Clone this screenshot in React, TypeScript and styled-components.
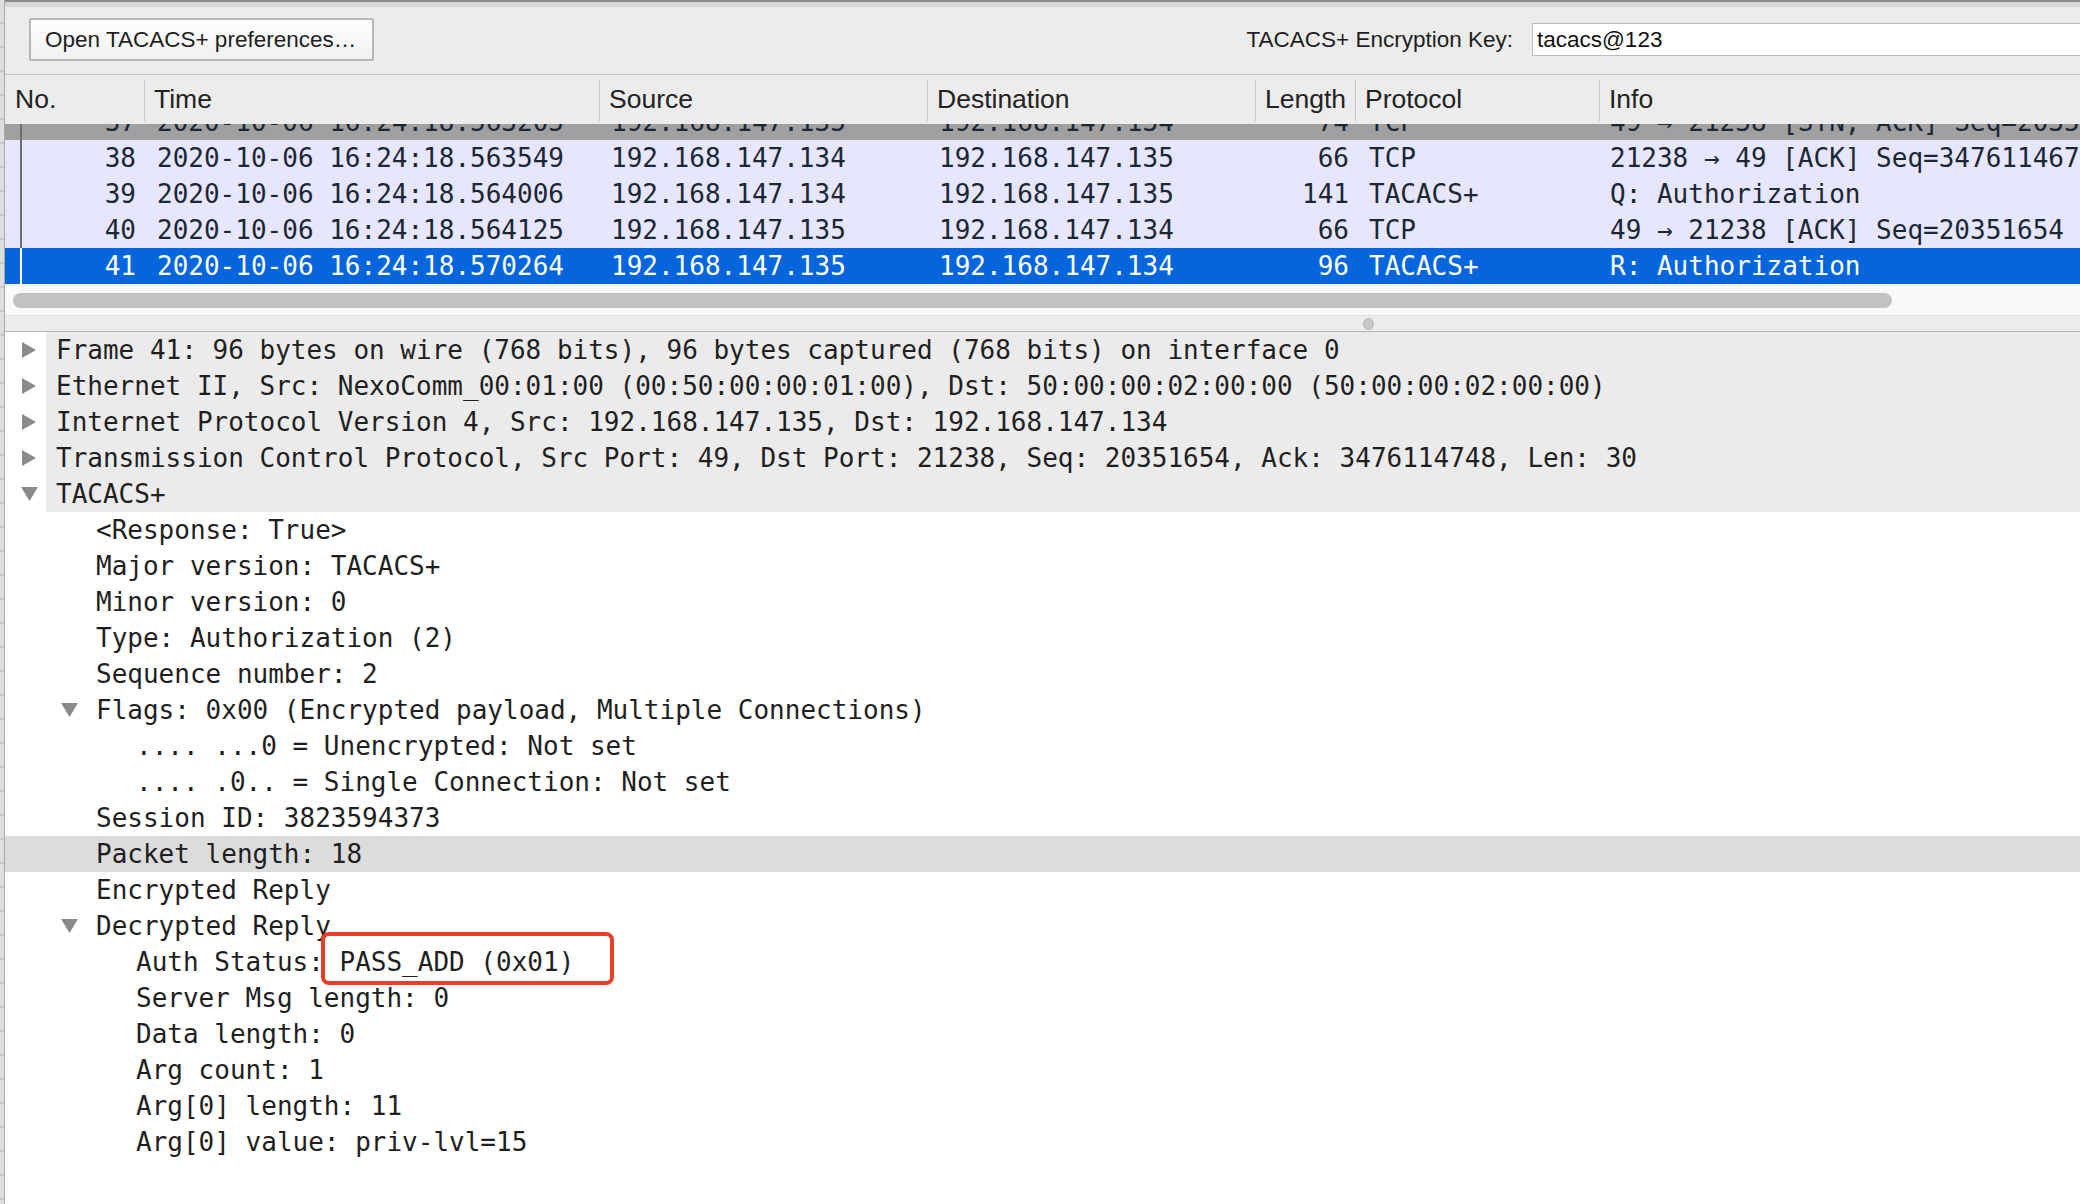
import React from "react";
import styled, { createGlobalStyle } from "styled-components";

const GlobalStyle = createGlobalStyle`
  html, body { margin: 0; padding: 0; background: #ffffff; overflow: hidden; }
  #root { height: 1204px; }
`;

const SANS = `"Liberation Sans", Arial, Helvetica, sans-serif`;
const MONO = `"DejaVu Sans Mono", Menlo, monospace`;
const COLS = "139px 455px 328px 328px 100px 244px 1fr";

const Window = styled.div`
  display: flex;
  height: 1204px;
  width: 2080px;
  overflow: hidden;
  background: #ffffff;
`;

const LeftEdge = styled.div`
  width: 4px;
  flex: none;
  background: repeating-linear-gradient(180deg, #dedede 0 22px, #c9c9c9 22px 24px);
  border-right: 1px solid #a9a9a9;
`;

const Main = styled.div`
  flex: 1;
  min-width: 0;
  display: flex;
  flex-direction: column;
`;

const Toolbar = styled.div`
  height: 72px;
  flex: none;
  display: flex;
  align-items: center;
  padding-left: 24px;
  border-top: 2px solid #8e8e8e;
  background: linear-gradient(180deg, #d8d8d8 0 5px, #ececec 5px);
  overflow: hidden;
  font-family: ${SANS};
  font-size: 22.5px;
  color: #1e1e1e;
`;

const PrefButton = styled.button`
  height: 43px;
  width: 345px;
  margin-top: 3px;
  padding: 0 0 0 14px;
  text-align: left;
  border: 2px solid #b6b6b6;
  border-radius: 2px;
  background: linear-gradient(180deg, #fefefe 0%, #f1f1f1 100%);
  font-family: ${SANS};
  font-size: 22.5px;
  color: #1e1e1e;
`;

const Spacer = styled.div`
  flex: 1;
`;

const KeyLabel = styled.label`
  margin-right: 19px;
  margin-top: 3px;
  white-space: nowrap;
`;

const KeyInput = styled.input`
  flex: none;
  width: 552px;
  height: 33px;
  margin-top: 3px;
  margin-right: -4px;
  box-sizing: border-box;
  padding: 0 4px;
  border: 1px solid #bcbcbc;
  background: #ffffff;
  font-family: ${SANS};
  font-size: 22.5px;
  color: #111111;
  outline: none;
`;

const Header = styled.div`
  display: grid;
  grid-template-columns: ${COLS};
  height: 49px;
  flex: none;
  border-top: 1px solid #c4c4c4;
  background: #ececec;
  font-family: ${SANS};
  font-size: 26.5px;
  color: #222222;
  position: relative;
  z-index: 1;
`;

const HeaderCell = styled.div<{ $first?: boolean }>`
  display: flex;
  align-items: center;
  padding-left: ${(p) => (p.$first ? "10px" : "9px")};
  padding-bottom: 2px;
  margin: 5px 0 3px;
  border-left: ${(p) => (p.$first ? "none" : "1px solid #c6c6c6")};
  white-space: nowrap;
  overflow: hidden;
`;

const ListArea = styled.div`
  height: 161px;
  flex: none;
  overflow: hidden;
  background: #ffffff;
`;

const RowsTrack = styled.div`
  margin-top: -20px;
`;

type Kind = "syn" | "tcp" | "sel";

const PacketRow = styled.div<{ $kind: Kind }>`
  display: grid;
  grid-template-columns: ${COLS};
  height: 36px;
  align-items: center;
  font-family: ${MONO};
  font-size: 26px;
  white-space: nowrap;
  background: ${(p) =>
    p.$kind === "syn" ? "#a0a0a0" : p.$kind === "sel" ? "#0465dd" : "#e7e6ff"};
  color: ${(p) => (p.$kind === "sel" ? "#ffffff" : "#1b2733")};
`;

const NoCell = styled.div`
  display: flex;
  align-items: stretch;
  height: 100%;
`;

const RelLine = styled.span<{ $kind: Kind }>`
  width: 2px;
  margin-left: 15px;
  background: ${(p) => (p.$kind === "sel" ? "#ffffff" : "#6e6e6e")};
`;

const NoText = styled.span`
  flex: 1;
  display: flex;
  align-items: center;
  justify-content: flex-end;
  padding-right: 8px;
`;

const Cell = styled.div<{ $pad?: number; $right?: boolean }>`
  padding-left: ${(p) => (p.$right ? 0 : p.$pad ?? 12)}px;
  padding-right: ${(p) => (p.$right ? 6 : 0)}px;
  text-align: ${(p) => (p.$right ? "right" : "left")};
  overflow: hidden;
`;

const HScroll = styled.div`
  height: 29px;
  flex: none;
  display: flex;
  align-items: center;
  padding-left: 8px;
  background: #f9f9f9;
  border-top: 1px solid #ececec;
`;

const HThumb = styled.div`
  width: 1879px;
  height: 15px;
  border-radius: 8px;
  background: #c2c2c2;
`;

const Splitter = styled.div`
  height: 15px;
  flex: none;
  display: flex;
  align-items: center;
  padding-left: 1358px;
  background: #ececec;
  border-top: 1px solid #e0e0e0;
  border-bottom: 1px solid #b3b3b3;
`;

const SplitDot = styled.div`
  width: 9px;
  height: 10px;
  border-radius: 50%;
  background: #c8c8c8;
  border: 1px solid #b8b8b8;
`;

const Tree = styled.div`
  flex: 1;
  background: #ffffff;
  font-family: ${MONO};
  font-size: 26px;
  color: #1f1f1f;
`;

const TreeRow = styled.div<{ $top?: boolean; $hl?: boolean }>`
  position: relative;
  display: flex;
  align-items: center;
  height: 36px;
  white-space: nowrap;
  background: ${(p) =>
    p.$hl
      ? "#dcdcdc"
      : p.$top
      ? "linear-gradient(90deg, #ffffff 0 41px, #ebebeb 41px)"
      : "#ffffff"};
`;

const Indent = styled.span<{ $level: number }>`
  flex: none;
  width: ${(p) => p.$level * 40}px;
`;

const ArrowSlot = styled.span`
  flex: none;
  width: 51px;
  display: flex;
  align-items: center;
  padding-left: 16px;
  box-sizing: border-box;
`;

const Callout = styled.div`
  position: absolute;
  z-index: 5;
  left: 316px;
  top: -12px;
  width: 293px;
  height: 53px;
  box-sizing: border-box;
  border: 4.5px solid #e6402a;
  border-radius: 8px;
  pointer-events: none;
`;

const Arrow = ({ dir }: { dir: "right" | "down" }) =>
  dir === "right" ? (
    <svg width="16" height="18" viewBox="0 0 16 18">
      <polygon points="1,1 15,9 1,17" fill="#8b8b8b" />
    </svg>
  ) : (
    <svg width="17" height="16" viewBox="0 0 17 16">
      <polygon points="0,1 17,1 8.5,15" fill="#8b8b8b" />
    </svg>
  );

const packets: {
  no: number;
  time: string;
  src: string;
  dst: string;
  len: number;
  proto: string;
  info: string;
  kind: Kind;
}[] = [
  {
    no: 37,
    time: "2020-10-06 16:24:18.563205",
    src: "192.168.147.135",
    dst: "192.168.147.134",
    len: 74,
    proto: "TCP",
    info: "49 → 21238 [SYN, ACK] Seq=20351653 Ack=3476114747 Win=4128 Len=0",
    kind: "syn",
  },
  {
    no: 38,
    time: "2020-10-06 16:24:18.563549",
    src: "192.168.147.134",
    dst: "192.168.147.135",
    len: 66,
    proto: "TCP",
    info: "21238 → 49 [ACK] Seq=3476114674 Ack=20351654 Win=64240 Len=0",
    kind: "tcp",
  },
  {
    no: 39,
    time: "2020-10-06 16:24:18.564006",
    src: "192.168.147.134",
    dst: "192.168.147.135",
    len: 141,
    proto: "TACACS+",
    info: "Q: Authorization",
    kind: "tcp",
  },
  {
    no: 40,
    time: "2020-10-06 16:24:18.564125",
    src: "192.168.147.135",
    dst: "192.168.147.134",
    len: 66,
    proto: "TCP",
    info: "49 → 21238 [ACK] Seq=20351654 Ack=3476114823 Win=4053 Len=0",
    kind: "tcp",
  },
  {
    no: 41,
    time: "2020-10-06 16:24:18.570264",
    src: "192.168.147.135",
    dst: "192.168.147.134",
    len: 96,
    proto: "TACACS+",
    info: "R: Authorization",
    kind: "sel",
  },
];

type Node = {
  text: string;
  level: number;
  arrow?: "right" | "down";
  top?: boolean;
  hl?: boolean;
  callout?: boolean;
};

const nodes: Node[] = [
  { text: "Frame 41: 96 bytes on wire (768 bits), 96 bytes captured (768 bits) on interface 0", level: 0, arrow: "right", top: true },
  { text: "Ethernet II, Src: NexoComm_00:01:00 (00:50:00:00:01:00), Dst: 50:00:00:02:00:00 (50:00:00:02:00:00)", level: 0, arrow: "right", top: true },
  { text: "Internet Protocol Version 4, Src: 192.168.147.135, Dst: 192.168.147.134", level: 0, arrow: "right", top: true },
  { text: "Transmission Control Protocol, Src Port: 49, Dst Port: 21238, Seq: 20351654, Ack: 3476114748, Len: 30", level: 0, arrow: "right", top: true },
  { text: "TACACS+", level: 0, arrow: "down", top: true },
  { text: "<Response: True>", level: 1 },
  { text: "Major version: TACACS+", level: 1 },
  { text: "Minor version: 0", level: 1 },
  { text: "Type: Authorization (2)", level: 1 },
  { text: "Sequence number: 2", level: 1 },
  { text: "Flags: 0x00 (Encrypted payload, Multiple Connections)", level: 1, arrow: "down" },
  { text: ".... ...0 = Unencrypted: Not set", level: 2 },
  { text: ".... .0.. = Single Connection: Not set", level: 2 },
  { text: "Session ID: 3823594373", level: 1 },
  { text: "Packet length: 18", level: 1, hl: true },
  { text: "Encrypted Reply", level: 1 },
  { text: "Decrypted Reply", level: 1, arrow: "down" },
  { text: "Auth Status: PASS_ADD (0x01)", level: 2, callout: true },
  { text: "Server Msg length: 0", level: 2 },
  { text: "Data length: 0", level: 2 },
  { text: "Arg count: 1", level: 2 },
  { text: "Arg[0] length: 11", level: 2 },
  { text: "Arg[0] value: priv-lvl=15", level: 2 },
];

export default function App() {
  return (
    <>
      <GlobalStyle />
      <Window>
        <LeftEdge />
        <Main>
          <Toolbar>
            <PrefButton type="button">Open TACACS+ preferences…</PrefButton>
            <Spacer />
            <KeyLabel>TACACS+ Encryption Key:</KeyLabel>
            <KeyInput defaultValue="tacacs@123" />
          </Toolbar>

          <Header>
            <HeaderCell $first>No.</HeaderCell>
            <HeaderCell>Time</HeaderCell>
            <HeaderCell>Source</HeaderCell>
            <HeaderCell>Destination</HeaderCell>
            <HeaderCell>Length</HeaderCell>
            <HeaderCell>Protocol</HeaderCell>
            <HeaderCell>Info</HeaderCell>
          </Header>

          <ListArea>
            <RowsTrack>
              {packets.map((p) => (
                <PacketRow key={p.no} $kind={p.kind}>
                  <NoCell>
                    <RelLine $kind={p.kind} />
                    <NoText>{p.no}</NoText>
                  </NoCell>
                  <Cell $pad={13}>{p.time}</Cell>
                  <Cell>{p.src}</Cell>
                  <Cell>{p.dst}</Cell>
                  <Cell $right>{p.len}</Cell>
                  <Cell $pad={14}>{p.proto}</Cell>
                  <Cell $pad={11}>{p.info}</Cell>
                </PacketRow>
              ))}
            </RowsTrack>
          </ListArea>

          <HScroll>
            <HThumb />
          </HScroll>
          <Splitter>
            <SplitDot />
          </Splitter>

          <Tree>
            {nodes.map((n, i) => (
              <TreeRow key={i} $top={n.top} $hl={n.hl}>
                <Indent $level={n.level} />
                <ArrowSlot>{n.arrow ? <Arrow dir={n.arrow} /> : null}</ArrowSlot>
                <span>{n.text}</span>
                {n.callout ? <Callout /> : null}
              </TreeRow>
            ))}
          </Tree>
        </Main>
      </Window>
    </>
  );
}
